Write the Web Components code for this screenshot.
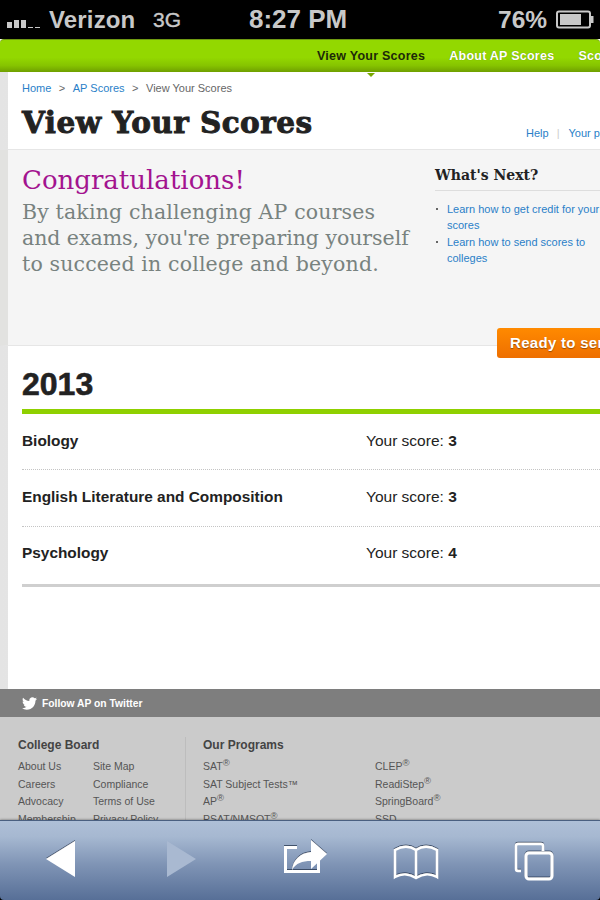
<!DOCTYPE html>
<html>
<head>
<meta charset="utf-8">
<title>View Your Scores</title>
<style>
  html, body { margin: 0; padding: 0; height: 100%; overflow: hidden; background: #000; }
  body { display: flex; flex-direction: column; width: 600px; height: 900px; font-family: "Liberation Sans", Arial, sans-serif; }
</style>
</head>
<body>
<ios-status-bar></ios-status-bar>
<web-view>
  <ap-nav></ap-nav>
  <page-shell>
    <page-header></page-header>
    <congrats-hero></congrats-hero>
    <score-list year="2013">
      <score-row subject="Biology" score="3"></score-row>
      <score-row subject="English Literature and Composition" score="3"></score-row>
      <score-row subject="Psychology" score="4"></score-row>
    </score-list>
  </page-shell>
  <site-footer></site-footer>
</web-view>
<safari-toolbar></safari-toolbar>

<script>
'use strict';

(function() {
  // small helper so each class only has to hand over its markup
  function shadow(el, html) {
    el.attachShadow({ mode: 'open' }).innerHTML = html;
  }

  class IosStatusBar extends HTMLElement {
    constructor() {
      super();
      shadow(this, `
        <style>
          :host { display: flex; flex: none; height: 39px; background: #000; color: #c8c8c8; align-items: center;
            font: bold 24px "Liberation Sans", Arial, sans-serif; box-sizing: border-box; padding: 0 0 0 7px; }
          .signal { display: flex; align-items: flex-end; gap: 2px; height: 11px; margin-top: 5px; width: 41px; flex: none; }
          .signal i { display: block; width: 5px; background: #c8c8c8; }
          .carrier { margin-left: 1px; width: 104px; letter-spacing: .15px; flex: none; }
          .net { width: 96px; flex: none; font-weight: normal; font-size: 21px; -webkit-text-stroke: .4px #c8c8c8; }
          .time { width: 249px; flex: none; font-size: 26px; }
          .pct { flex: none; font-size: 24.5px; width: 58px; }
          svg { flex: none; }
        </style>
        <div class="signal"><i style="height:6px"></i><i style="height:8px"></i><i style="height:8px"></i><i style="height:1px"></i><i style="height:1px"></i></div>
        <span class="carrier">Verizon</span>
        <span class="net">3G</span>
        <span class="time">8:27 PM</span>
        <span class="pct">76%</span>
        <svg width="40" height="20" viewBox="0 0 40 20">
          <rect x="1" y="1.500" width="33" height="16" rx="2" fill="none" stroke="#c8c8c8" stroke-width="2"/>
          <rect x="4" y="4" width="21" height="11" fill="#c8c8c8"/>
          <path d="M35 6h2.500v7H35z" fill="#c8c8c8"/>
        </svg>
      `);
    }
  }

  class WebView extends HTMLElement {
    constructor() {
      super();
      shadow(this, `
        <style>
          :host { display: block; flex: 1 1 0; min-height: 0; overflow: hidden; background: #fff; }
        </style>
        <slot></slot>
      `);
    }
  }

  class ApNav extends HTMLElement {
    constructor() {
      super();
      shadow(this, `
        <style>
          :host { display: flex; position: relative; height: 33px; box-sizing: border-box; align-items: center; gap: 24px;
            padding: 0 0 1px 317px; white-space: nowrap; z-index: 1;
            border-radius: 4px 4px 0 0; border-top: 1px solid #6f9a10;
            background: linear-gradient(#93d800 0, #93d800 55%, #86c400 80%, #6f9f00 100%);
            font: bold 12.5px "Liberation Sans", Arial, sans-serif; letter-spacing: .25px; color: #fff; }
          span { text-shadow: 0 0 1px rgba(60,80,0,.5); }
          .on { color: #1d2a08; position: relative; text-shadow: none; }
          .on::after { content: ""; position: absolute; left: 50%; margin-left: -4px; top: 24px;
            border: 4px solid transparent; border-top-color: #78a800; border-bottom: 0; }
        </style>
        <span class="on">View Your Scores</span>
        <span>About AP Scores</span>
        <span>Score Reports</span>
      `);
    }
  }

  class PageShell extends HTMLElement {
    constructor() {
      super();
      shadow(this, `
        <style>
          :host { display: block; height: 617px; overflow: hidden; padding-left: 8px;
            background: linear-gradient(to right, #e4e4e4, #eeeeee 75%, #fff 100%); }
        </style>
        <slot></slot>
      `);
    }
  }

  class PageHeader extends HTMLElement {
    constructor() {
      super();
      shadow(this, `
        <style>
          :host { display: block; height: 78px; box-sizing: border-box; padding: 9px 0 0 14px; background: #fff;
            border-bottom: 1px solid #e6e6e6; position: relative; white-space: nowrap; }
          nav { font: 11px/14px "Liberation Sans", Arial, sans-serif; color: #666; display: flex; gap: 7.5px; }
          a { color: #2a7fc8; text-decoration: none; }
          h1 { margin: 10px 0 0; font: bold 29.5px/36px "DejaVu Serif", serif; color: #222; letter-spacing: .45px;
            -webkit-text-stroke: .9px #222; }
          .links { position: absolute; left: 518px; top: 54px; font: 11px/14px "Liberation Sans", Arial, sans-serif; display: flex; gap: 8px; color: #ccc; }
          .links span { margin-right: 1px; }
        </style>
        <nav><a>Home</a><span>&gt;</span><a>AP Scores</a><span>&gt;</span><span>View Your Scores</span></nav>
        <h1>View Your Scores</h1>
        <div class="links"><a>Help</a><span>|</span><a>Your profile</a></div>
      `);
    }
  }

  class CongratsHero extends HTMLElement {
    constructor() {
      super();
      shadow(this, `
        <style>
          :host { display: flex; height: 196px; box-sizing: border-box; background: #f5f5f5; padding: 14px 0 0 14px; margin-left: -8px;
            border-left: 8px solid #e2e2e0; border-bottom: 1px solid #e6e6e6; position: relative; }
          .intro { width: 413px; flex: none; }
          h2 { margin: 0; font: normal 26px/32px "DejaVu Serif", serif; color: #a3138f; }
          p { margin: 3px 0 0; font: normal 20.5px/26px "DejaVu Serif", serif; color: #78827f; letter-spacing: .15px; white-space: nowrap; }
          .tight { letter-spacing: -.05px; }
          .next { width: 180px; flex: none; }
          h3 { margin: 3px 0 0; padding-bottom: 6px; font: bold 14px/17px "DejaVu Serif", serif; color: #222; border-bottom: 1px solid #ddd; }
          ul { margin: 10px 0 0; padding: 0 0 0 12px; width: 158px; list-style: none; font: 11px/16.4px "Liberation Sans", Arial, sans-serif; }
          li { color: #2a7fc8; position: relative; }
          li::before { content: ""; position: absolute; left: -11px; top: 7px; width: 2px; height: 2px; background: #666; }
          .send { position: absolute; left: 489px; top: 178px; width: 140px; height: 30px; box-sizing: border-box; white-space: nowrap;
            border-radius: 3px; background: linear-gradient(#ff8a00, #ee6f00); padding-left: 13px; letter-spacing: .3px;
            font: bold 15px/30px "Liberation Sans", Arial, sans-serif; color: #fff; text-shadow: 0 1px 1px #9a4a00; }
        </style>
        <div class="intro">
          <h2>Congratulations!</h2>
          <p>By taking challenging AP courses<br><span class="tight">and exams, you're preparing yourself</span><br>to succeed in college and beyond.</p>
        </div>
        <div class="next">
          <h3>What's Next?</h3>
          <ul>
            <li>Learn how to get credit for your scores</li>
            <li>Learn how to send scores to colleges</li>
          </ul>
        </div>
        <div class="send">Ready to send</div>
      `);
    }
  }

  class ScoreList extends HTMLElement {
    constructor() {
      super();
      shadow(this, `
        <style>
          :host { display: block; padding: 20px 0 0 14px; background: #fff; height: 100%; }
          h2 { margin: 0; font: bold 32px/37px "Liberation Sans", Arial, sans-serif; color: #222; -webkit-text-stroke: .6px #222; }
          .rows { margin-top: 6px; border-top: 5px solid #8fd000; border-bottom: 3px solid #cfcfcf; }
        </style>
        <h2></h2>
        <div class="rows"><slot></slot></div>
      `);
      this.shadowRoot.querySelector('h2').textContent = this.getAttribute('year') || '';
    }
  }

  class ScoreRow extends HTMLElement {
    constructor() {
      super();
      shadow(this, `
        <style>
          :host { display: flex; height: 57px; box-sizing: border-box; padding-top: 16px; color: #222; border-bottom: 1px dotted #c4c4c4;
            font: 15.5px/22px "Liberation Sans", Arial, sans-serif; }
          :host(:first-child) { height: 56px; }
          :host(:last-child) { border-bottom: 0; padding-top: 15px; }
          .subject { width: 344px; flex: none; font-weight: bold; font-size: 15.4px; }
          b { font-weight: bold; }
        </style>
        <div class="subject"></div>
        <div>Your score: <b></b></div>
      `);
      this.shadowRoot.querySelector('.subject').textContent = this.getAttribute('subject') || '';
      this.shadowRoot.querySelector('b').textContent = this.getAttribute('score') || '';
    }
  }

  class SiteFooter extends HTMLElement {
    constructor() {
      super();
      shadow(this, `
        <style>
          :host { display: block; background: #cbcbcb; color: #555; font: 10.5px/17.5px "Liberation Sans", Arial, sans-serif; white-space: nowrap; }
          .tw { display: flex; align-items: center; height: 28px; background: #7e7e7e; color: #fff; font-weight: bold; font-size: 10.3px; padding: 1px 0 0 22px; box-sizing: border-box; gap: 5px; }
          .cols { display: flex; padding: 20px 0 0 18px; }
          .cb { width: 167px; flex: none; border-right: 1px solid #bdbdbd; margin-right: 17px; }
          h4 { margin: 0 0 5px; font: bold 12px/16px "Liberation Sans", Arial, sans-serif; color: #444; }
          .grid { display: grid; }
          .cb .grid { grid-template-columns: 75px 90px; }
          .pr .grid { grid-template-columns: 172px 120px; }
          sup { font-size: 9.5px; line-height: 0; }
        </style>
        <div class="tw">
          <svg width="15" height="13" viewBox="0 0 24 20"><path fill="#fff" d="M24 2.400c-.9.400-1.800.700-2.800.800 1-.600 1.800-1.600 2.200-2.700-1 .600-2 1-3.100 1.200C19.300.700 18 0 16.600 0c-2.700 0-4.900 2.200-4.900 4.900 0 .400 0 .800.100 1.100C7.700 5.800 4.100 3.900 1.700.900 1.200 1.600 1 2.500 1 3.400c0 1.700.900 3.200 2.200 4.100-.800 0-1.600-.200-2.200-.600v.100c0 2.400 1.700 4.400 3.900 4.800-.700.200-1.500.200-2.200.100.600 2 2.400 3.400 4.600 3.400-1.700 1.300-3.800 2.100-6.100 2.100-.400 0-.800 0-1.200-.100C2.200 19.200 4.800 20 7.500 20c9.100 0 14-7.500 14-14v-.600c1-.700 1.800-1.600 2.500-3z"/></svg>
          <span>Follow AP on Twitter</span>
        </div>
        <div class="cols">
          <div class="cb">
            <h4>College Board</h4>
            <div class="grid">
              <span>About Us</span><span>Site Map</span>
              <span>Careers</span><span>Compliance</span>
              <span>Advocacy</span><span>Terms of Use</span>
              <span>Membership</span><span>Privacy Policy</span>
            </div>
          </div>
          <div class="pr">
            <h4>Our Programs</h4>
            <div class="grid">
              <span>SAT<sup>&reg;</sup></span><span>CLEP<sup>&reg;</sup></span>
              <span>SAT Subject Tests&trade;</span><span>ReadiStep<sup>&reg;</sup></span>
              <span>AP<sup>&reg;</sup></span><span>SpringBoard<sup>&reg;</sup></span>
              <span>PSAT/NMSQT<sup>&reg;</sup></span><span>SSD</span>
            </div>
          </div>
        </div>
      `);
    }
  }

  class SafariToolbar extends HTMLElement {
    constructor() {
      super();
      shadow(this, `
        <style>
          :host { display: block; flex: none; height: 80px; box-sizing: border-box; position: relative; z-index: 2;
            border-top: 1px solid #4a5f80; box-shadow: 0 -1px 2px rgba(0,0,0,.25); border-radius: 0 0 4px 4px;
            background: linear-gradient(#aebfd7 0, #a6b8d1 20%, #7f94b5 55%, #576f97 100%); }
          svg { display: block; width: 600px; height: 79px; }
        </style>
        <svg viewBox="0 0 600 79">
          <defs>
            <filter id="sh" x="-20%" y="-20%" width="140%" height="140%"><feDropShadow dx="0" dy="-1" stdDeviation="0" flood-color="#2b3a55" flood-opacity=".8"/></filter>
          </defs>
          <path d="M46 38 75 20v36z" fill="#fff" filter="url(#sh)"/>
          <path d="M167 20v36l29-18z" fill="#a9b9d1"/>
          <g filter="url(#sh)" fill="#fff">
            <path d="M284 25h13v3h-10v21h30v-11h3v14h-36z"/>
            <path d="M311 19 327 33 311 48v-8c-9 0-15 2-19 9 1-10 8-17 19-18z"/>
          </g>
          <g filter="url(#sh)" fill="none" stroke="#fff" stroke-width="2.500">
            <path d="M395 56V29c7-4 15-4 21 0 6-4 14-4 21 0v27c-7-4-15-3-21 1-6-4-14-5-21-1z"/>
            <path d="M416 29v28"/>
          </g>
          <g filter="url(#sh)" fill="none" stroke="#fff" stroke-width="2.500">
            <path d="M521 50h-3a2 2 0 0 1-2-2V25a2 2 0 0 1 2-2h23a2 2 0 0 1 2 2v5"/>
            <rect x="526" y="32" width="26" height="26" rx="3" stroke-width="3"/>
          </g>
        </svg>
      `);
    }
  }

  customElements.define('ios-status-bar', IosStatusBar);
  customElements.define('web-view', WebView);
  customElements.define('ap-nav', ApNav);
  customElements.define('page-shell', PageShell);
  customElements.define('page-header', PageHeader);
  customElements.define('congrats-hero', CongratsHero);
  customElements.define('score-list', ScoreList);
  customElements.define('score-row', ScoreRow);
  customElements.define('site-footer', SiteFooter);
  customElements.define('safari-toolbar', SafariToolbar);
})();
</script>
</body>
</html>
